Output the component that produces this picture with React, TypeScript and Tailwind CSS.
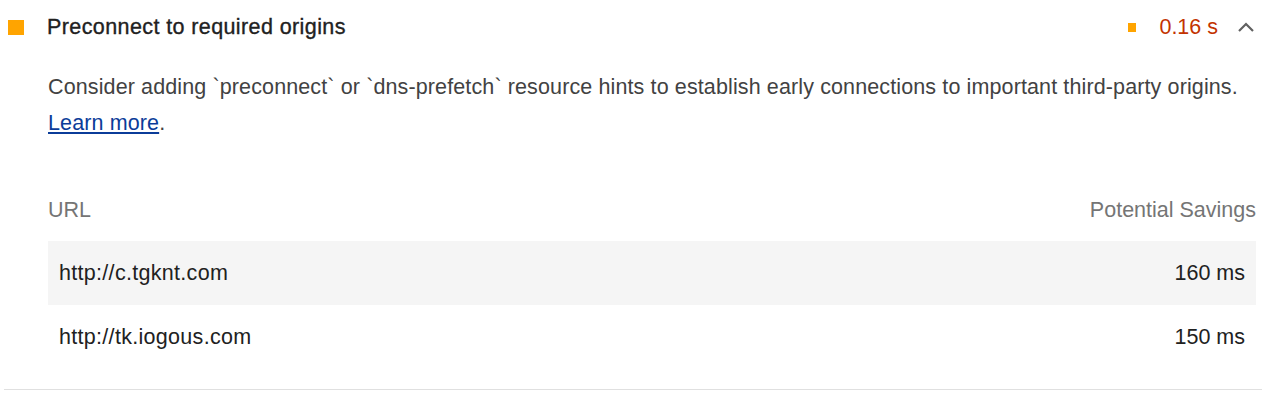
import React from 'react'

const rows = [
  { url: 'http://c.tgknt.com', savings: '160 ms' },
  { url: 'http://tk.iogous.com', savings: '150 ms' },
]

const App = () => {
  return (
    <div className="w-[1266px] h-[408px] bg-white font-['Liberation_Sans',Arial,sans-serif] text-[21.5px]">
      <div className="mx-[4px] border-b border-[#e0e0e0]">
        {/* Header */}
        <div className="flex items-center h-[54px] pl-[4px] pr-[7px]">
          <span className="w-[16px] h-[15px] bg-[#ffa400] mr-[23px]" />
          <h2 className="flex-1 text-[#212121] text-[21.5px] tracking-[0.4px] [-webkit-text-stroke:0.35px_#212121]">Preconnect to required origins</h2>
          <span className="w-[8px] h-[9px] bg-[#ffa400] mr-[23px]" />
          <span className="text-[#c33300] text-[21.5px] mr-[19px]">0.16 s</span>
          <svg width="18" height="12" viewBox="0 0 18 12" className="text-[#616161]">
            <path d="M2 10 L9 3 L16 10" fill="none" stroke="currentColor" strokeWidth="2.2" />
          </svg>
        </div>

        {/* Body */}
        <div className="pl-[44px] pr-[6px]">
          <p className="text-[#424242] text-[21.5px] leading-[36px] mt-[15px] tracking-[0.12px]">
            Consider adding `preconnect` or `dns-prefetch` resource hints to establish early connections to important third-party origins.{' '}
            <a href="#" className="text-[#0b3c99] underline">Learn more</a>.
          </p>

          <table className="w-full mt-[38px] mb-[20px] border-collapse">
            <thead>
              <tr className="h-[62px] text-[#757575]">
                <th className="text-left font-normal px-0">URL</th>
                <th className="text-right font-normal px-0">Potential Savings</th>
              </tr>
            </thead>
            <tbody>
              {rows.map((row, i) => (
                <tr key={row.url} className={`h-[64px] text-[#212121] ${i === 0 ? 'bg-[#f5f5f5]' : ''}`}>
                  <td className="pl-[11px] tracking-[0.3px]">{row.url}</td>
                  <td className="pr-[11px] text-right">{row.savings}</td>
                </tr>
              ))}
            </tbody>
          </table>
        </div>
      </div>
    </div>
  )
}

export default App
